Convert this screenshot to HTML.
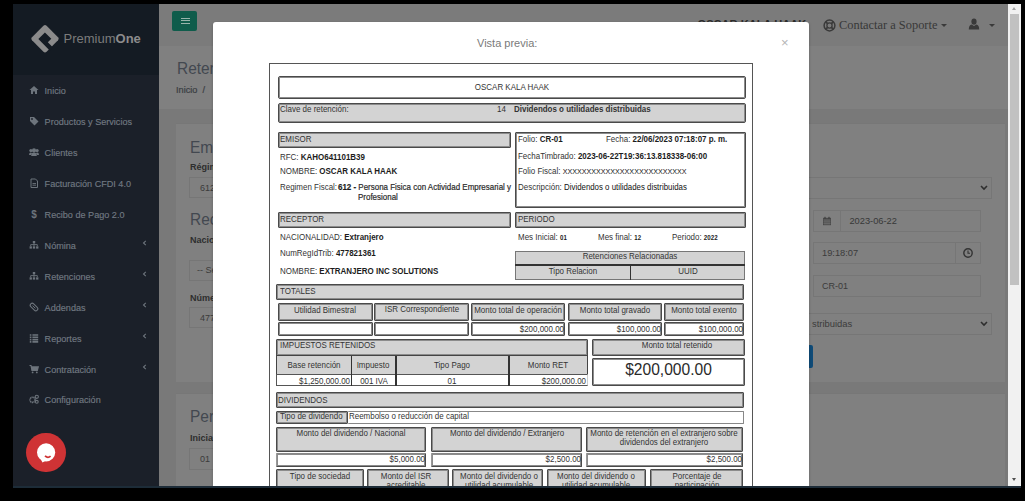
<!DOCTYPE html>
<html><head><meta charset="utf-8"><title>Vista previa</title>
<style>
html,body{margin:0;padding:0}
body{width:1025px;height:501px;background:#000;position:relative;overflow:hidden;font-family:"Liberation Sans",sans-serif}
.a{position:absolute}
.b{position:absolute;box-sizing:border-box}
.t{position:absolute;white-space:nowrap}
.t b{color:#1c1c1c}
</style></head><body>

<div class="a" style="left:13px;top:4px;width:146px;height:482px;background:#1b2029"></div>
<div class="a" style="left:13px;top:4px;width:146px;height:71px;background:#141b23"></div>
<div class="a" style="left:159px;top:4px;width:849px;height:42px;background:#7b7b7b"></div>
<div class="a" style="left:159px;top:46px;width:849px;height:63px;background:#808080"></div>
<div class="a" style="left:159px;top:109px;width:849px;height:377px;background:#797979"></div>
<div class="a" style="left:176px;top:123px;width:829px;height:258px;background:#808080;border-top:1px solid #777"></div>
<div class="a" style="left:176px;top:393px;width:829px;height:93px;background:#808080;border-top:1px solid #777"></div>
<div class="a" style="left:13px;top:486px;width:1008px;height:2px;background:#1d2c38"></div>
<div class="a" style="left:1008px;top:4px;width:13px;height:482px;background:#f1f1f1"></div>
<div class="a" style="left:1010px;top:14px;width:9px;height:271px;background:#c1c1c1"></div>
<div class="a" style="left:1011.8px;top:6.8px;width:0;height:0;border-left:2.7px solid transparent;border-right:2.7px solid transparent;border-bottom:3.2px solid #a3a3a3"></div>
<div class="a" style="left:1011.8px;top:477.8px;width:0;height:0;border-left:2.7px solid transparent;border-right:2.7px solid transparent;border-top:3.2px solid #505050"></div>
<svg class="a" style="left:25px;top:19px" width="40" height="40" viewBox="-20 -20 40 40">
<g transform="translate(0,-0.2) rotate(45)">
<rect x="-10.3" y="-10.3" width="20.6" height="20.6" rx="2.2" fill="#8b8b8b"/>
<path d="M-4.5 -4.4 H4.5 V0.5 H11.5 V4.9 H-4.5 Z" fill="#141b23"/>
</g></svg>
<div class="t" style="left:63.5px;top:31px;font-size:13px;line-height:16px;color:#7b7b7b;letter-spacing:0">Premium<b style="color:#8c8c8c">One</b></div>
<div class="t" style="left:44.6px;top:84.8px;font-size:9.1px;line-height:12px;color:#717982;-webkit-text-stroke:0.15px #717982;">Inicio</div>
<svg class="a" style="left:29px;top:85.2px" width="10" height="10" viewBox="0 0 10 10"><path d="M5 1 L9.5 5 H8 V9 H6 V6.5 H4 V9 H2 V5 H0.5 Z" fill="#6d747c"/></svg>
<div class="t" style="left:44.6px;top:115.8px;font-size:9.1px;line-height:12px;color:#717982;-webkit-text-stroke:0.15px #717982;">Productos y Servicios</div>
<svg class="a" style="left:29px;top:116.2px" width="10" height="10" viewBox="0 0 10 10"><path d="M1 1 H5 L9.5 5.5 L5.5 9.5 L1 5 Z" fill="#6d747c"/><circle cx="3" cy="3" r="0.9" fill="#1b2029"/></svg>
<div class="t" style="left:44.6px;top:146.8px;font-size:9.1px;line-height:12px;color:#717982;-webkit-text-stroke:0.15px #717982;">Clientes</div>
<svg class="a" style="left:29px;top:147.2px" width="10" height="10" viewBox="0 0 10 10"><circle cx="5" cy="3.4" r="2.1" fill="#6d747c"/><circle cx="1.9" cy="3.6" r="1.6" fill="#6d747c"/><circle cx="8.1" cy="3.6" r="1.6" fill="#6d747c"/><path d="M2.2 9 Q2.2 5.6 5 5.6 Q7.8 5.6 7.8 9 Z M0 8 Q0 5.6 2 5.6 L3 6.2 Q2 7 2 8Z M10 8 Q10 5.6 8 5.6 L7 6.2 Q8 7 8 8Z" fill="#6d747c"/></svg>
<div class="t" style="left:44.6px;top:177.8px;font-size:9.1px;line-height:12px;color:#717982;-webkit-text-stroke:0.15px #717982;">Facturación CFDI 4.0</div>
<svg class="a" style="left:29px;top:178.2px" width="10" height="10" viewBox="0 0 10 10"><path d="M2 1 H6.5 L8.5 3 V9.5 H2 Z" fill="none" stroke="#6d747c" stroke-width="1"/><path d="M3.5 5.5 H7 M3.5 7.2 H7" stroke="#6d747c" stroke-width="0.9"/></svg>
<div class="t" style="left:44.6px;top:208.8px;font-size:9.1px;line-height:12px;color:#717982;-webkit-text-stroke:0.15px #717982;">Recibo de Pago 2.0</div>
<svg class="a" style="left:29px;top:209.2px" width="10" height="10" viewBox="0 0 10 10"><text x="5" y="9" font-size="10" font-weight="bold" text-anchor="middle" font-family="Liberation Sans" fill="#6d747c">$</text></svg>
<div class="t" style="left:44.6px;top:239.8px;font-size:9.1px;line-height:12px;color:#717982;-webkit-text-stroke:0.15px #717982;">Nómina</div>
<svg class="a" style="left:29px;top:240.2px" width="10" height="10" viewBox="0 0 10 10"><rect x="3.8" y="1" width="2.4" height="2.2" fill="#6d747c"/><path d="M5 3 V5 M1.7 6 V4.6 H8.3 V6 M5 5 V6" stroke="#6d747c" stroke-width="0.9" fill="none"/><rect x="0.6" y="6.3" width="2.3" height="2.3" fill="#6d747c"/><rect x="3.85" y="6.3" width="2.3" height="2.3" fill="#6d747c"/><rect x="7.1" y="6.3" width="2.3" height="2.3" fill="#6d747c"/></svg>
<svg class="a" style="left:142px;top:240px" width="5" height="6" viewBox="0 0 5 6"><path d="M3.8 0.8 L1.5 3 L3.8 5.2" fill="none" stroke="#6d747c" stroke-width="1.1"/></svg>
<div class="t" style="left:44.6px;top:270.8px;font-size:9.1px;line-height:12px;color:#717982;-webkit-text-stroke:0.15px #717982;">Retenciones</div>
<svg class="a" style="left:29px;top:271.2px" width="10" height="10" viewBox="0 0 10 10"><rect x="3.8" y="1" width="2.4" height="2.2" fill="#6d747c"/><path d="M5 3 V5 M1.7 6 V4.6 H8.3 V6 M5 5 V6" stroke="#6d747c" stroke-width="0.9" fill="none"/><rect x="0.6" y="6.3" width="2.3" height="2.3" fill="#6d747c"/><rect x="3.85" y="6.3" width="2.3" height="2.3" fill="#6d747c"/><rect x="7.1" y="6.3" width="2.3" height="2.3" fill="#6d747c"/></svg>
<svg class="a" style="left:142px;top:271px" width="5" height="6" viewBox="0 0 5 6"><path d="M3.8 0.8 L1.5 3 L3.8 5.2" fill="none" stroke="#6d747c" stroke-width="1.1"/></svg>
<div class="t" style="left:44.6px;top:301.8px;font-size:9.1px;line-height:12px;color:#717982;-webkit-text-stroke:0.15px #717982;">Addendas</div>
<svg class="a" style="left:29px;top:302.2px" width="10" height="10" viewBox="0 0 10 10"><g transform="rotate(-45 5 5)"><rect x="3" y="0.5" width="4" height="9" rx="2" fill="none" stroke="#6d747c" stroke-width="1.1"/><path d="M5 3 V7" stroke="#6d747c" stroke-width="0.9"/></g></svg>
<svg class="a" style="left:142px;top:302px" width="5" height="6" viewBox="0 0 5 6"><path d="M3.8 0.8 L1.5 3 L3.8 5.2" fill="none" stroke="#6d747c" stroke-width="1.1"/></svg>
<div class="t" style="left:44.6px;top:332.8px;font-size:9.1px;line-height:12px;color:#717982;-webkit-text-stroke:0.15px #717982;">Reportes</div>
<svg class="a" style="left:29px;top:333.2px" width="10" height="10" viewBox="0 0 10 10"><path d="M0.8 2 H2.4 M3.4 2 H9.2 M0.8 4.3 H2.4 M3.4 4.3 H9.2 M0.8 6.6 H2.4 M3.4 6.6 H9.2 M0.8 8.9 H2.4 M3.4 8.9 H9.2" stroke="#6d747c" stroke-width="1.6"/></svg>
<svg class="a" style="left:142px;top:333px" width="5" height="6" viewBox="0 0 5 6"><path d="M3.8 0.8 L1.5 3 L3.8 5.2" fill="none" stroke="#6d747c" stroke-width="1.1"/></svg>
<div class="t" style="left:44.6px;top:363.8px;font-size:9.1px;line-height:12px;color:#717982;-webkit-text-stroke:0.15px #717982;">Contratación</div>
<svg class="a" style="left:29px;top:364.2px" width="10" height="10" viewBox="0 0 10 10"><path d="M0.5 1.5 H2 L3 6.5 H8.3 L9.3 2.8 H2.4" fill="none" stroke="#6d747c" stroke-width="1.2"/><rect x="2.6" y="3" width="6.3" height="3.4" fill="#6d747c"/><circle cx="3.6" cy="8.4" r="0.9" fill="#6d747c"/><circle cx="7.8" cy="8.4" r="0.9" fill="#6d747c"/></svg>
<svg class="a" style="left:142px;top:364px" width="5" height="6" viewBox="0 0 5 6"><path d="M3.8 0.8 L1.5 3 L3.8 5.2" fill="none" stroke="#6d747c" stroke-width="1.1"/></svg>
<div class="t" style="left:44.6px;top:393.8px;font-size:9.1px;line-height:12px;color:#717982;-webkit-text-stroke:0.15px #717982;">Configuración</div>
<svg class="a" style="left:29px;top:394.2px" width="10" height="10" viewBox="0 0 10 10"><circle cx="3.6" cy="5.8" r="2.6" fill="none" stroke="#6d747c" stroke-width="1.6" stroke-dasharray="1.3 0.5"/><circle cx="7.8" cy="2.8" r="1.6" fill="none" stroke="#6d747c" stroke-width="1.1"/><circle cx="7.8" cy="7.8" r="1.4" fill="none" stroke="#6d747c" stroke-width="1.1"/></svg>
<div class="a" style="left:26.3px;top:432.7px;width:39.8px;height:39.8px;border-radius:50%;background:#cf3335"></div>
<svg class="a" style="left:34px;top:441px" width="24" height="24" viewBox="0 0 24 24">
<circle cx="12.1" cy="11.4" r="9.1" fill="#fff"/>
<path d="M6 17 L8.5 21.5 L13 19 Z" fill="#fff"/>
<path d="M11 14.9 Q13.9 17.6 16.6 15.1" fill="none" stroke="#cf3335" stroke-width="1.7"/>
</svg>
<div class="a" style="left:172.3px;top:11.3px;width:25px;height:19.7px;background:#0f5c4b;border-radius:2px"></div>
<div class="a" style="left:181px;top:17.5px;width:9px;height:1.1px;background:#98b4ab"></div>
<div class="a" style="left:181px;top:20.3px;width:9px;height:1.1px;background:#98b4ab"></div>
<div class="a" style="left:181px;top:23.1px;width:9px;height:1.1px;background:#98b4ab"></div>
<div class="t" style="left:697.5px;top:17px;font-size:11.1px;line-height:14px;color:#2c2c2c;font-weight:bold">OSCAR KALA HAAK</div>
<div class="t" style="left:839px;top:18px;font-size:12.4px;line-height:15px;color:#383838;font-family:'Liberation Serif',serif">Contactar a Soporte</div>
<svg class="a" style="left:822.5px;top:18.5px" width="13" height="13" viewBox="0 0 13 13">
<circle cx="6.5" cy="6.5" r="5.4" fill="none" stroke="#3a3a3a" stroke-width="1.5"/>
<circle cx="6.5" cy="6.5" r="2.6" fill="none" stroke="#3a3a3a" stroke-width="1.3"/>
<path d="M2.6 2.6 L4.6 4.6 M10.4 2.6 L8.4 4.6 M2.6 10.4 L4.6 8.4 M10.4 10.4 L8.4 8.4" stroke="#3a3a3a" stroke-width="1.8"/>
</svg>
<div class="a" style="left:941px;top:24px;width:0;height:0;border-left:3px solid transparent;border-right:3px solid transparent;border-top:3px solid #3a3a3a"></div>
<svg class="a" style="left:968px;top:18px" width="12" height="12" viewBox="0 0 12 12">
<ellipse cx="6" cy="3.6" rx="2.6" ry="3.2" fill="#3a3a3a"/>
<path d="M0.8 11.5 Q0.8 7.2 3.6 6.6 L6 8 L8.4 6.6 Q11.2 7.2 11.2 11.5 Z" fill="#3a3a3a"/>
</svg>
<div class="a" style="left:988.5px;top:24px;width:0;height:0;border-left:3px solid transparent;border-right:3px solid transparent;border-top:3px solid #3a3a3a"></div>
<div class="t" style="left:176.5px;top:58.2px;font-size:16.8px;line-height:22px;color:#434850;transform:scaleX(0.92);transform-origin:0 50%;">Retenciones</div>
<div class="t" style="left:176px;top:84.0px;font-size:9.2px;line-height:12px;color:#3a3d42;-webkit-text-stroke:0.2px #3a3d42;">Inicio &nbsp;/</div>
<div class="t" style="left:190px;top:137.0px;font-size:16.8px;line-height:22px;color:#434850;transform:scaleX(0.92);transform-origin:0 50%;">Emisor</div>
<div class="t" style="left:190px;top:161.0px;font-size:9px;line-height:12px;color:#2e2e2e;font-weight:bold;">Régimen</div>
<div class="b" style="left:189px;top:177px;width:71px;height:21px;background:#808080;border:1px solid #767676;"></div>
<div class="t" style="left:200px;top:182.0px;font-size:9px;line-height:12px;color:#3b3b3b;">612</div>
<div class="t" style="left:190px;top:209.0px;font-size:16.8px;line-height:22px;color:#434850;transform:scaleX(0.92);transform-origin:0 50%;">Receptor</div>
<div class="t" style="left:190px;top:234.0px;font-size:9px;line-height:12px;color:#2e2e2e;font-weight:bold;">Nacionalidad</div>
<div class="b" style="left:189px;top:260px;width:71px;height:21px;background:#808080;border:1px solid #767676;"></div>
<div class="t" style="left:197px;top:264.0px;font-size:9px;line-height:12px;color:#3b3b3b;">-- Seleccione</div>
<div class="t" style="left:190px;top:292.0px;font-size:9px;line-height:12px;color:#2e2e2e;font-weight:bold;">Número</div>
<div class="b" style="left:189px;top:307px;width:71px;height:21px;background:#808080;border:1px solid #767676;"></div>
<div class="t" style="left:200px;top:312.0px;font-size:9px;line-height:12px;color:#3b3b3b;">477821361</div>
<div class="t" style="left:190px;top:406.2px;font-size:16.8px;line-height:22px;color:#434850;transform:scaleX(0.92);transform-origin:0 50%;">Periodo</div>
<div class="t" style="left:190px;top:432.0px;font-size:9px;line-height:12px;color:#2e2e2e;font-weight:bold;">Inicial</div>
<div class="b" style="left:189px;top:448px;width:71px;height:21.600000000000023px;background:#808080;border:1px solid #767676;"></div>
<div class="t" style="left:200px;top:452.6px;font-size:9px;line-height:12px;color:#3b3b3b;">01</div>
<div class="b" style="left:700px;top:177px;width:292px;height:22px;background:#808080;border:1px solid #767676;"></div>
<svg class="a" style="left:980px;top:185px" width="8" height="6" viewBox="0 0 8 6"><path d="M1 1 L4 4 L7 1" fill="none" stroke="#2e2e2e" stroke-width="1.6"/></svg>
<div class="b" style="left:813px;top:210px;width:168px;height:22px;background:#808080;border:1px solid #767676;"></div>
<div class="b" style="left:813px;top:210px;width:28px;height:22px;background:#808080;border:1px solid #767676;"></div>
<div class="t" style="left:849.4px;top:215.0px;font-size:9.3px;line-height:12px;color:#383838;">2023-06-22</div>
<div class="b" style="left:813px;top:242px;width:168px;height:22px;background:#808080;border:1px solid #767676;"></div>
<div class="b" style="left:955px;top:242px;width:26px;height:22px;background:#808080;border:1px solid #767676;"></div>
<div class="t" style="left:822px;top:247.0px;font-size:9.3px;line-height:12px;color:#3b3b3b;">19:18:07</div>
<svg class="a" style="left:962px;top:247px" width="12" height="12" viewBox="0 0 12 12"><circle cx="6" cy="6" r="4.2" fill="none" stroke="#333" stroke-width="1.4"/><path d="M6 3.5 V6.2 H8" fill="none" stroke="#333" stroke-width="1.1"/></svg>
<svg class="a" style="left:822px;top:216px" width="10" height="10" viewBox="0 0 10 10"><rect x="1" y="1.8" width="8" height="7.4" fill="#4a4a4a"/><path d="M1.5 4 H8.5 M1.5 5.8 H8.5 M1.5 7.5 H8.5 M3 3.5 V9 M5 3.5 V9 M7 3.5 V9" stroke="#7a7a7a" stroke-width="0.5"/><path d="M3 0.8 V2.6 M7 0.8 V2.6" stroke="#333" stroke-width="1"/></svg>
<div class="b" style="left:813px;top:275px;width:168px;height:22px;background:#808080;border:1px solid #767676;"></div>
<div class="t" style="left:822px;top:280.0px;font-size:9px;line-height:12px;color:#3b3b3b;">CR-01</div>
<div class="b" style="left:700px;top:313px;width:292px;height:22px;background:#808080;border:1px solid #767676;"></div>
<div class="t" style="left:812px;top:317.5px;font-size:9.4px;line-height:12px;color:#3b3b3b;">stribuidas</div>
<svg class="a" style="left:980px;top:321px" width="8" height="6" viewBox="0 0 8 6"><path d="M1 1 L4 4 L7 1" fill="none" stroke="#2e2e2e" stroke-width="1.6"/></svg>
<div class="a" style="left:790px;top:345px;width:23px;height:23px;background:#0f4b78;border-radius:2px"></div>
<div class="a" style="left:213px;top:22px;width:596px;height:470px;background:#fff;border-radius:3px;box-shadow:0 1px 3px rgba(0,0,0,.25)"></div>
<div class="t" style="left:477px;top:36px;font-size:11px;line-height:14px;color:#7a7a7a">Vista previa:</div>
<div class="t" style="left:781px;top:35.5px;font-size:13px;line-height:14px;color:#b5b5b5">&times;</div>
<div class="b" style="left:269px;top:63px;width:484px;height:440px;border:1px solid #555;background:#fff"></div>
<div class="b" style="left:278px;top:75.7px;width:468px;height:23.39999999999999px;background:#fff;border:1px solid #4a4a4a;box-shadow:inset 0 0 0 1px #8c8c8c;border-radius:2px"></div>
<div class="t" style="left:362.0px;top:81.8px;font-size:8.8px;line-height:10px;color:#333;transform:scaleX(0.905);transform-origin:50% 50%;width:300px;text-align:center;">OSCAR KALA HAAK</div>
<div class="b" style="left:278px;top:102.7px;width:468px;height:20.5px;background:#d3d3d3;border:1px solid #4a4a4a;box-shadow:inset 0 0 0 1px #8c8c8c;border-radius:2px"></div>
<div class="t" style="left:280px;top:104.0px;font-size:8.8px;line-height:10px;color:#333;transform:scaleX(0.905);transform-origin:0 50%;">Clave de retención:</div>
<div class="t" style="left:497px;top:104.0px;font-size:8.8px;line-height:10px;color:#333;transform:scaleX(0.905);transform-origin:0 50%;">14</div>
<div class="t" style="left:514px;top:104.0px;font-size:8.8px;line-height:10px;color:#333;transform:scaleX(0.905);transform-origin:0 50%;font-weight:bold;">Dividendos o utilidades distribuidas</div>
<div class="b" style="left:278px;top:132px;width:233px;height:16px;background:#d3d3d3;border:1px solid #4a4a4a;box-shadow:inset 0 0 0 1px #8c8c8c;border-radius:1px"></div>
<div class="t" style="left:280px;top:134.0px;font-size:8.8px;line-height:10px;color:#333;transform:scaleX(0.905);transform-origin:0 50%;">EMISOR</div>
<div class="t" style="left:280px;top:152.0px;font-size:8.8px;line-height:10px;color:#333;transform:scaleX(0.905);transform-origin:0 50%;">RFC: <b>KAHO641101B39</b></div>
<div class="t" style="left:280px;top:166.0px;font-size:8.8px;line-height:10px;color:#333;transform:scaleX(0.905);transform-origin:0 50%;">NOMBRE: <b>OSCAR KALA HAAK</b></div>
<div class="t" style="left:280px;top:182.0px;font-size:8.8px;line-height:10px;color:#333;transform:scaleX(0.905);transform-origin:0 50%;">Regimen Fiscal:</div>
<div class="t" style="left:338.2px;top:182.4px;font-size:8.8px;line-height:10px;color:#2a2a2a;transform:scaleX(0.905);transform-origin:0 50%;-webkit-text-stroke:0.2px #2a2a2a;"><b>612 - </b>Persona Fisica con Actividad Empresarial y</div>
<div class="t" style="left:357.8px;top:192.4px;font-size:8.8px;line-height:10px;color:#2a2a2a;transform:scaleX(0.905);transform-origin:0 50%;-webkit-text-stroke:0.2px #2a2a2a;">Profesional</div>
<div class="b" style="left:515px;top:132px;width:231px;height:76px;background:#fff;border:1px solid #4a4a4a;box-shadow:inset 0 0 0 1px #8c8c8c;border-radius:1px"></div>
<div class="t" style="left:518px;top:134.0px;font-size:8.8px;line-height:10px;color:#333;transform:scaleX(0.905);transform-origin:0 50%;">Folio: <b>CR-01</b></div>
<div class="t" style="left:605.5px;top:134.0px;font-size:8.8px;line-height:10px;color:#333;transform:scaleX(0.905);transform-origin:0 50%;">Fecha: <b>22/06/2023 07:18:07 p. m.</b></div>
<div class="t" style="left:518px;top:151.0px;font-size:8.8px;line-height:10px;color:#333;transform:scaleX(0.905);transform-origin:0 50%;">FechaTimbrado: <b>2023-06-22T19:36:13.818338-06:00</b></div>
<div class="t" style="left:518px;top:166.0px;font-size:8.8px;line-height:10px;color:#333;transform:scaleX(0.905);transform-origin:0 50%;">Folio Fiscal: <span style="font-size:7.9px;color:#111">XXXXXXXXXXXXXXXXXXXXXXXXXX</span></div>
<div class="t" style="left:518px;top:182.0px;font-size:8.8px;line-height:10px;color:#333;transform:scaleX(0.905);transform-origin:0 50%;">Descripción: <span style="font-size:8.7px;color:#111">Dividendos o utilidades distribuidas</span></div>
<div class="b" style="left:278px;top:212px;width:233px;height:16px;background:#d3d3d3;border:1px solid #4a4a4a;box-shadow:inset 0 0 0 1px #8c8c8c;border-radius:1px"></div>
<div class="t" style="left:280px;top:213.5px;font-size:8.8px;line-height:10px;color:#333;transform:scaleX(0.905);transform-origin:0 50%;">RECEPTOR</div>
<div class="t" style="left:280px;top:231.5px;font-size:8.8px;line-height:10px;color:#333;transform:scaleX(0.905);transform-origin:0 50%;">NACIONALIDAD: <b>Extranjero</b></div>
<div class="t" style="left:280px;top:248.0px;font-size:8.8px;line-height:10px;color:#333;transform:scaleX(0.905);transform-origin:0 50%;">NumRegIdTrib: <b>477821361</b></div>
<div class="t" style="left:280px;top:265.5px;font-size:8.8px;line-height:10px;color:#333;transform:scaleX(0.905);transform-origin:0 50%;">NOMBRE: <b>EXTRANJERO INC SOLUTIONS</b></div>
<div class="b" style="left:515px;top:212px;width:231px;height:16px;background:#d3d3d3;border:1px solid #4a4a4a;box-shadow:inset 0 0 0 1px #8c8c8c;border-radius:1px"></div>
<div class="t" style="left:518px;top:213.5px;font-size:8.8px;line-height:10px;color:#333;transform:scaleX(0.905);transform-origin:0 50%;">PERIODO</div>
<div class="t" style="left:518px;top:231.5px;font-size:8.8px;line-height:10px;color:#333;transform:scaleX(0.905);transform-origin:0 50%;">Mes Inicial: <b style="font-size:6.7px">01</b></div>
<div class="t" style="left:597.8px;top:231.5px;font-size:8.8px;line-height:10px;color:#333;transform:scaleX(0.905);transform-origin:0 50%;">Mes final: <b style="font-size:6.7px">12</b></div>
<div class="t" style="left:672.2px;top:231.5px;font-size:8.8px;line-height:10px;color:#333;transform:scaleX(0.905);transform-origin:0 50%;">Periodo: <b style="font-size:6.8px">2022</b></div>
<div class="b" style="left:515px;top:250.6px;width:229.5px;height:29.00000000000003px;background:#d3d3d3;border:1px solid #777;"></div>
<div class="a" style="left:515px;top:264.3px;width:229.5px;height:1.5px;background:#333"></div>
<div class="a" style="left:629.5px;top:264.5px;width:1.5px;height:15px;background:#333"></div>
<div class="t" style="left:480.0px;top:251.0px;font-size:8.8px;line-height:10px;color:#333;transform:scaleX(0.905);transform-origin:50% 50%;width:300px;text-align:center;">Retenciones Relacionadas</div>
<div class="t" style="left:423.0px;top:266.0px;font-size:8.8px;line-height:10px;color:#333;transform:scaleX(0.905);transform-origin:50% 50%;width:300px;text-align:center;">Tipo Relacion</div>
<div class="t" style="left:537.5px;top:266.0px;font-size:8.8px;line-height:10px;color:#333;transform:scaleX(0.905);transform-origin:50% 50%;width:300px;text-align:center;">UUID</div>
<div class="b" style="left:276px;top:284px;width:468px;height:15.5px;background:#d3d3d3;border:1px solid #4a4a4a;box-shadow:inset 0 0 0 1px #8c8c8c;border-radius:1px"></div>
<div class="t" style="left:280px;top:286.0px;font-size:8.8px;line-height:10px;color:#333;transform:scaleX(0.905);transform-origin:0 50%;">TOTALES</div>
<div class="b" style="left:278px;top:303px;width:94.5px;height:17.5px;background:#d3d3d3;border:1px solid #4a4a4a;box-shadow:inset 0 0 0 1px #8c8c8c;border-radius:1px"></div>
<div class="t" style="left:175.25px;top:305.3px;font-size:8.8px;line-height:10px;color:#333;transform:scaleX(0.905);transform-origin:50% 50%;width:300px;text-align:center;">Utilidad Bimestral</div>
<div class="b" style="left:278px;top:322px;width:94.5px;height:14px;background:#fff;border:1px solid #4a4a4a;box-shadow:inset 0 0 0 1px #8c8c8c;border-radius:1px"></div>
<div class="b" style="left:374px;top:303px;width:95px;height:17.5px;background:#d3d3d3;border:1px solid #4a4a4a;box-shadow:inset 0 0 0 1px #8c8c8c;border-radius:1px"></div>
<div class="t" style="left:271.5px;top:304.3px;font-size:8.8px;line-height:10px;color:#333;transform:scaleX(0.905);transform-origin:50% 50%;width:300px;text-align:center;">ISR Correspondiente</div>
<div class="b" style="left:374px;top:322px;width:95px;height:14px;background:#fff;border:1px solid #4a4a4a;box-shadow:inset 0 0 0 1px #8c8c8c;border-radius:1px"></div>
<div class="b" style="left:470.5px;top:303px;width:94.5px;height:17.5px;background:#d3d3d3;border:1px solid #4a4a4a;box-shadow:inset 0 0 0 1px #8c8c8c;border-radius:1px"></div>
<div class="t" style="left:367.75px;top:304.8px;font-size:8.8px;line-height:10px;color:#333;transform:scaleX(0.905);transform-origin:50% 50%;width:300px;text-align:center;">Monto total de operación</div>
<div class="b" style="left:470.5px;top:322px;width:94.5px;height:14px;background:#fff;border:1px solid #4a4a4a;box-shadow:inset 0 0 0 1px #8c8c8c;border-radius:1px"></div>
<div class="t" style="left:263.5px;top:323.5px;font-size:8.8px;line-height:10px;color:#333;transform:scaleX(0.905);transform-origin:100% 50%;width:300px;text-align:right;">$200,000.00</div>
<div class="b" style="left:567.5px;top:303px;width:94.5px;height:17.5px;background:#d3d3d3;border:1px solid #4a4a4a;box-shadow:inset 0 0 0 1px #8c8c8c;border-radius:1px"></div>
<div class="t" style="left:464.75px;top:305.0px;font-size:8.8px;line-height:10px;color:#333;transform:scaleX(0.905);transform-origin:50% 50%;width:300px;text-align:center;">Monto total gravado</div>
<div class="b" style="left:567.5px;top:322px;width:94.5px;height:14px;background:#fff;border:1px solid #4a4a4a;box-shadow:inset 0 0 0 1px #8c8c8c;border-radius:1px"></div>
<div class="t" style="left:360.5px;top:323.5px;font-size:8.8px;line-height:10px;color:#333;transform:scaleX(0.905);transform-origin:100% 50%;width:300px;text-align:right;">$100,000.00</div>
<div class="b" style="left:664px;top:303px;width:80px;height:17.5px;background:#d3d3d3;border:1px solid #4a4a4a;box-shadow:inset 0 0 0 1px #8c8c8c;border-radius:1px"></div>
<div class="t" style="left:554.0px;top:304.8px;font-size:8.8px;line-height:10px;color:#333;transform:scaleX(0.905);transform-origin:50% 50%;width:300px;text-align:center;">Monto total exento</div>
<div class="b" style="left:664px;top:322px;width:80px;height:14px;background:#fff;border:1px solid #4a4a4a;box-shadow:inset 0 0 0 1px #8c8c8c;border-radius:1px"></div>
<div class="t" style="left:442.5px;top:323.5px;font-size:8.8px;line-height:10px;color:#333;transform:scaleX(0.905);transform-origin:100% 50%;width:300px;text-align:right;">$100,000.00</div>
<div class="b" style="left:276px;top:339px;width:312px;height:17px;background:#d3d3d3;border:1px solid #4a4a4a;box-shadow:inset 0 0 0 1px #8c8c8c;border-radius:1px"></div>
<div class="t" style="left:279.5px;top:339.9px;font-size:8.8px;line-height:10px;color:#333;transform:scaleX(0.905);transform-origin:0 50%;">IMPUESTOS RETENIDOS</div>
<div class="b" style="left:276px;top:355px;width:312px;height:19.5px;background:#d3d3d3;border:1.5px solid #444;"></div>
<div class="b" style="left:276px;top:373.5px;width:312px;height:12.5px;background:#fff;border:1px solid #555;border-right-color:#ccc"></div>
<div class="a" style="left:350.5px;top:356px;width:1.5px;height:30px;background:#333"></div>
<div class="a" style="left:395px;top:356px;width:1.5px;height:30px;background:#333"></div>
<div class="a" style="left:508px;top:356px;width:1.5px;height:30px;background:#333"></div>
<div class="t" style="left:163.5px;top:359.9px;font-size:8.8px;line-height:10px;color:#333;transform:scaleX(0.905);transform-origin:50% 50%;width:300px;text-align:center;">Base retención</div>
<div class="t" style="left:223.0px;top:359.9px;font-size:8.8px;line-height:10px;color:#333;transform:scaleX(0.905);transform-origin:50% 50%;width:300px;text-align:center;">Impuesto</div>
<div class="t" style="left:301.5px;top:359.9px;font-size:8.8px;line-height:10px;color:#333;transform:scaleX(0.905);transform-origin:50% 50%;width:300px;text-align:center;">Tipo Pago</div>
<div class="t" style="left:397.5px;top:359.9px;font-size:8.8px;line-height:10px;color:#333;transform:scaleX(0.905);transform-origin:50% 50%;width:300px;text-align:center;">Monto RET</div>
<div class="t" style="left:49.5px;top:375.5px;font-size:8.8px;line-height:10px;color:#333;transform:scaleX(0.905);transform-origin:100% 50%;width:300px;text-align:right;">$1,250,000.00</div>
<div class="t" style="left:223.5px;top:375.5px;font-size:8.8px;line-height:10px;color:#333;transform:scaleX(0.905);transform-origin:50% 50%;width:300px;text-align:center;">001 IVA</div>
<div class="t" style="left:301.5px;top:375.5px;font-size:8.8px;line-height:10px;color:#333;transform:scaleX(0.905);transform-origin:50% 50%;width:300px;text-align:center;">01</div>
<div class="t" style="left:286px;top:375.5px;font-size:8.8px;line-height:10px;color:#333;transform:scaleX(0.905);transform-origin:100% 50%;width:300px;text-align:right;">$200,000.00</div>
<div class="b" style="left:592px;top:338.8px;width:153px;height:16.899999999999977px;background:#d3d3d3;border:1px solid #4a4a4a;box-shadow:inset 0 0 0 1px #8c8c8c;border-radius:1px"></div>
<div class="t" style="left:527.3px;top:339.9px;font-size:8.8px;line-height:10px;color:#333;transform:scaleX(0.905);transform-origin:50% 50%;width:300px;text-align:center;">Monto total retenido</div>
<div class="b" style="left:592px;top:358px;width:153px;height:28px;background:#fff;border:1px solid #4a4a4a;box-shadow:inset 0 0 0 1px #8c8c8c;border-radius:1px"></div>
<div class="t" style="left:518.5px;top:360.6px;font-size:15.6px;line-height:18px;color:#2a2a2a;width:300px;text-align:center;">$200,000.00</div>
<div class="b" style="left:275.5px;top:391.6px;width:468.5px;height:16.799999999999955px;background:#d3d3d3;border:1px solid #4a4a4a;box-shadow:inset 0 0 0 1px #8c8c8c;border-radius:1px"></div>
<div class="t" style="left:278px;top:395.0px;font-size:8.8px;line-height:10px;color:#333;transform:scaleX(0.905);transform-origin:0 50%;">DIVIDENDOS</div>
<div class="b" style="left:275.5px;top:410.6px;width:72.10000000000002px;height:13.599999999999966px;background:#d3d3d3;border:1px solid #4a4a4a;box-shadow:inset 0 0 0 1px #8c8c8c;border-radius:1px"></div>
<div class="t" style="left:280px;top:411.3px;font-size:8.8px;line-height:10px;color:#333;transform:scaleX(0.905);transform-origin:0 50%;">Tipo de dividendo</div>
<div class="b" style="left:347.6px;top:410.6px;width:396.4px;height:13.599999999999966px;background:#fff;border:1px solid #888;border-left:none;border-radius:1px"></div>
<div class="t" style="left:349px;top:411.0px;font-size:8.8px;line-height:10px;color:#333;transform:scaleX(0.905);transform-origin:0 50%;">Reembolso o reducción de capital</div>
<div class="b" style="left:275.5px;top:427px;width:150.5px;height:25.30000000000001px;background:#d3d3d3;border:1px solid #4a4a4a;box-shadow:inset 0 0 0 1px #8c8c8c;border-radius:1px"></div>
<div class="t" style="left:200.75px;top:428.4px;font-size:8.8px;line-height:10px;color:#333;transform:scaleX(0.905);transform-origin:50% 50%;width:300px;text-align:center;">Monto del dividendo / Nacional</div>
<div class="b" style="left:275.5px;top:453.2px;width:150.5px;height:13.800000000000011px;background:#fff;border:1px solid #4a4a4a;box-shadow:inset 0 0 0 1px #8c8c8c;border-radius:1px;border-left-color:#999;border-top-color:#888"></div>
<div class="t" style="left:124.5px;top:454.3px;font-size:8.8px;line-height:10px;color:#333;transform:scaleX(0.905);transform-origin:100% 50%;width:300px;text-align:right;">$5,000.00</div>
<div class="b" style="left:431px;top:427px;width:151px;height:25.30000000000001px;background:#d3d3d3;border:1px solid #4a4a4a;box-shadow:inset 0 0 0 1px #8c8c8c;border-radius:1px"></div>
<div class="t" style="left:356.5px;top:428.4px;font-size:8.8px;line-height:10px;color:#333;transform:scaleX(0.905);transform-origin:50% 50%;width:300px;text-align:center;">Monto del dividendo / Extranjero</div>
<div class="b" style="left:431px;top:453.2px;width:151px;height:13.800000000000011px;background:#fff;border:1px solid #4a4a4a;box-shadow:inset 0 0 0 1px #8c8c8c;border-radius:1px;border-left-color:#999;border-top-color:#888"></div>
<div class="t" style="left:280.5px;top:454.3px;font-size:8.8px;line-height:10px;color:#333;transform:scaleX(0.905);transform-origin:100% 50%;width:300px;text-align:right;">$2,500.00</div>
<div class="b" style="left:585.5px;top:427px;width:157.5px;height:25.30000000000001px;background:#d3d3d3;border:1px solid #4a4a4a;box-shadow:inset 0 0 0 1px #8c8c8c;border-radius:1px"></div>
<div class="t" style="left:514.25px;top:428.4px;font-size:8.8px;line-height:10px;color:#333;transform:scaleX(0.905);transform-origin:50% 50%;width:300px;text-align:center;">Monto de retención en el extranjero sobre</div>
<div class="t" style="left:514.25px;top:437.0px;font-size:8.8px;line-height:10px;color:#333;transform:scaleX(0.905);transform-origin:50% 50%;width:300px;text-align:center;">dividendos del extranjero</div>
<div class="b" style="left:585.5px;top:453.2px;width:157.5px;height:13.800000000000011px;background:#fff;border:1px solid #4a4a4a;box-shadow:inset 0 0 0 1px #8c8c8c;border-radius:1px;border-left-color:#999;border-top-color:#888"></div>
<div class="t" style="left:441.5px;top:454.3px;font-size:8.8px;line-height:10px;color:#333;transform:scaleX(0.905);transform-origin:100% 50%;width:300px;text-align:right;">$2,500.00</div>
<div class="b" style="left:275.5px;top:469px;width:88.5px;height:31px;background:#d3d3d3;border:1px solid #4a4a4a;box-shadow:inset 0 0 0 1px #8c8c8c;border-radius:1px"></div>
<div class="t" style="left:169.75px;top:471.3px;font-size:8.8px;line-height:10px;color:#333;transform:scaleX(0.905);transform-origin:50% 50%;width:300px;text-align:center;">Tipo de sociedad</div>
<div class="b" style="left:366.5px;top:469px;width:82.0px;height:31px;background:#d3d3d3;border:1px solid #4a4a4a;box-shadow:inset 0 0 0 1px #8c8c8c;border-radius:1px"></div>
<div class="t" style="left:256.0px;top:470.6px;font-size:8.8px;line-height:10px;color:#333;transform:scaleX(0.905);transform-origin:50% 50%;width:300px;text-align:center;">Monto del ISR</div>
<div class="t" style="left:256.0px;top:480.0px;font-size:8.8px;line-height:10px;color:#333;transform:scaleX(0.905);transform-origin:50% 50%;width:300px;text-align:center;">acreditable</div>
<div class="b" style="left:452px;top:469px;width:90.5px;height:31px;background:#d3d3d3;border:1px solid #4a4a4a;box-shadow:inset 0 0 0 1px #8c8c8c;border-radius:1px"></div>
<div class="t" style="left:348.75px;top:470.6px;font-size:8.8px;line-height:10px;color:#333;transform:scaleX(0.905);transform-origin:50% 50%;width:300px;text-align:center;">Monto del dividendo o</div>
<div class="t" style="left:348.75px;top:480.0px;font-size:8.8px;line-height:10px;color:#333;transform:scaleX(0.905);transform-origin:50% 50%;width:300px;text-align:center;">utilidad acumulable</div>
<div class="b" style="left:546.5px;top:469px;width:99.5px;height:31px;background:#d3d3d3;border:1px solid #4a4a4a;box-shadow:inset 0 0 0 1px #8c8c8c;border-radius:1px"></div>
<div class="t" style="left:446.25px;top:470.6px;font-size:8.8px;line-height:10px;color:#333;transform:scaleX(0.905);transform-origin:50% 50%;width:300px;text-align:center;">Monto del dividendo o</div>
<div class="t" style="left:446.25px;top:480.0px;font-size:8.8px;line-height:10px;color:#333;transform:scaleX(0.905);transform-origin:50% 50%;width:300px;text-align:center;">utilidad acumulable</div>
<div class="b" style="left:650px;top:469px;width:93px;height:31px;background:#d3d3d3;border:1px solid #4a4a4a;box-shadow:inset 0 0 0 1px #8c8c8c;border-radius:1px"></div>
<div class="t" style="left:546.5px;top:470.6px;font-size:8.8px;line-height:10px;color:#333;transform:scaleX(0.905);transform-origin:50% 50%;width:300px;text-align:center;">Porcentaje de</div>
<div class="t" style="left:546.5px;top:480.0px;font-size:8.8px;line-height:10px;color:#333;transform:scaleX(0.905);transform-origin:50% 50%;width:300px;text-align:center;">participación</div>
<div class="a" style="left:0;top:486px;width:1025px;height:15px;background:#000"></div>
<div class="a" style="left:13px;top:486px;width:1008px;height:2px;background:#1d2c38"></div>
<div class="a" style="left:1008px;top:4px;width:13px;height:482px;background:#f1f1f1"></div>
<div class="a" style="left:1010px;top:14px;width:9px;height:271px;background:#c1c1c1"></div>
<div class="a" style="left:1011.8px;top:6.8px;width:0;height:0;border-left:2.7px solid transparent;border-right:2.7px solid transparent;border-bottom:3.2px solid #a3a3a3"></div>
<div class="a" style="left:1011.8px;top:477.8px;width:0;height:0;border-left:2.7px solid transparent;border-right:2.7px solid transparent;border-top:3.2px solid #505050"></div>
</body></html>
